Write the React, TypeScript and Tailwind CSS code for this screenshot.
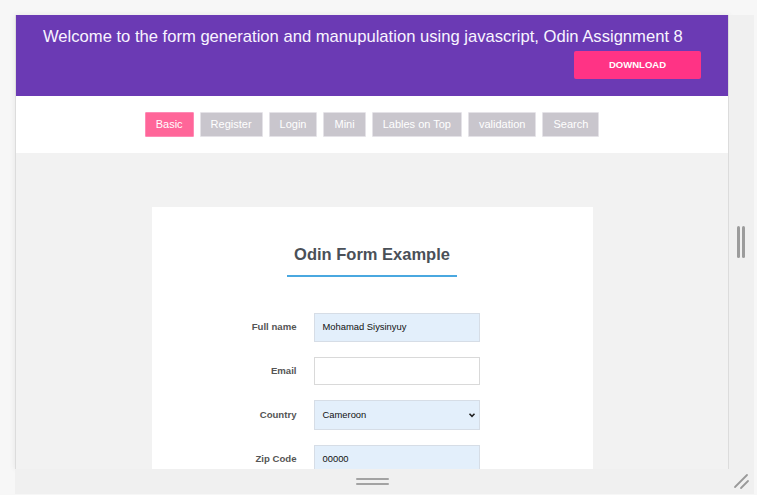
const tabs = ["Basic", "Register", "Login", "Mini", "Lables on Top", "validation", "Search"];

function FormRow({ label, children }: { label: string; children: React.ReactNode }) {
  return (
    <div className="flex items-center">
      <label className="w-[145px] text-right text-[9.6px] font-bold text-[#555]">{label}</label>
      <div className="ml-[17px] w-[166px]">{children}</div>
    </div>
  );
}

export default function App() {
  return (
    <div className="h-[495px] w-[757px] overflow-hidden bg-[#f7f7f7] pl-[15px] pt-[15px] font-['Liberation_Sans',Arial,sans-serif]">
      <div className="grid grid-cols-[714px_25px] grid-rows-[454px_25px]">
        {/* preview frame */}
        <div className="flex flex-col overflow-hidden border-x border-[#dcdcdc] bg-[#f2f2f2] shadow-[0_0_6px_rgba(0,0,0,0.08)]">
          <header className="h-[81px] shrink-0 bg-[#6b3ab4] px-[27px] pt-[12px]">
            <h1 className="whitespace-nowrap text-[16.6px] leading-[20px] text-[#f8f4ff]">
              Welcome to the form generation and manupulation using javascript, Odin Assignment 8
            </h1>
            <div className="mt-[4px] flex justify-end">
              <button className="h-[28px] w-[127px] rounded-[2px] bg-[#ff3385] text-[9.5px] font-bold text-white">
                DOWNLOAD
              </button>
            </div>
          </header>

          <nav className="flex h-[57px] shrink-0 items-center justify-center gap-[6px] bg-white">
            {tabs.map((t, i) => (
              <button
                key={t}
                className={
                  i === 0
                    ? "h-[25px] rounded-[1px] border border-[#ff8ab5] bg-[#ff6699] px-[10px] text-[11px] text-white"
                    : "h-[25px] rounded-[1px] border border-[#e4e2e7] bg-[#c9c6cd] px-[10px] text-[11px] text-white"
                }
              >
                {t}
              </button>
            ))}
          </nav>

          <main className="flex-1 pt-[54px]">
            <div className="mx-auto h-[400px] w-[441px] bg-white pt-[37px]">
              <h2 className="text-center text-[16.5px] font-bold leading-[20px] text-[#4a5058]">Odin Form Example</h2>
              <div className="mx-auto mt-[11px] h-[2px] w-[170px] bg-[#4aa8e0]" />

              <form className="mt-[36px] flex flex-col gap-[15px]">
                <FormRow label="Full name">
                  <div className="flex h-[29px] items-center border border-[#d6dde6] bg-[#e3effb] pl-[8px] text-[9.4px] text-[#111]">
                    Mohamad Siysinyuy
                  </div>
                </FormRow>
                <FormRow label="Email">
                  <div className="h-[28px] border border-[#d9d9d9] bg-white" />
                </FormRow>
                <FormRow label="Country">
                  <div className="flex h-[30px] items-center justify-between border border-[#d6dde6] bg-[#e3effb] pl-[8px] pr-[3px] text-[9.4px] text-[#111]">
                    <span>Cameroon</span>
                    <svg width="8" height="8" viewBox="0 0 8 8">
                      <polyline points="1.5,2.8 4,5.3 6.5,2.8" fill="none" stroke="#222" strokeWidth="1.6" />
                    </svg>
                  </div>
                </FormRow>
                <FormRow label="Zip Code">
                  <div className="flex h-[29px] items-center border border-[#d6dde6] bg-[#e3effb] pl-[8px] text-[9.4px] text-[#111]">
                    00000
                  </div>
                </FormRow>
              </form>
            </div>
          </main>
        </div>

        {/* right resize handle */}
        <div className="flex items-center justify-center bg-[#f0f0f0]">
          <div className="flex gap-[2px] pr-[2px]">
            <div className="h-[32px] w-[3px] rounded-full bg-[#9c9c9c]" />
            <div className="h-[32px] w-[3px] rounded-full bg-[#9c9c9c]" />
          </div>
        </div>

        {/* bottom resize handle */}
        <div className="flex items-center justify-center bg-[#f0f0f0]">
          <div className="flex flex-col gap-[3px]">
            <div className="h-[2px] w-[33px] rounded-full bg-[#a3a3a3]" />
            <div className="h-[2px] w-[33px] rounded-full bg-[#a3a3a3]" />
          </div>
        </div>

        {/* corner grip */}
        <div className="bg-[#f0f0f0]">
          <svg width="25" height="25" viewBox="0 0 25 25">
            <line x1="6" y1="18" x2="18" y2="6" stroke="#999" strokeWidth="1.8" strokeLinecap="round" />
            <line x1="12" y1="19" x2="19" y2="12" stroke="#999" strokeWidth="1.8" strokeLinecap="round" />
          </svg>
        </div>
      </div>
    </div>
  );
}
